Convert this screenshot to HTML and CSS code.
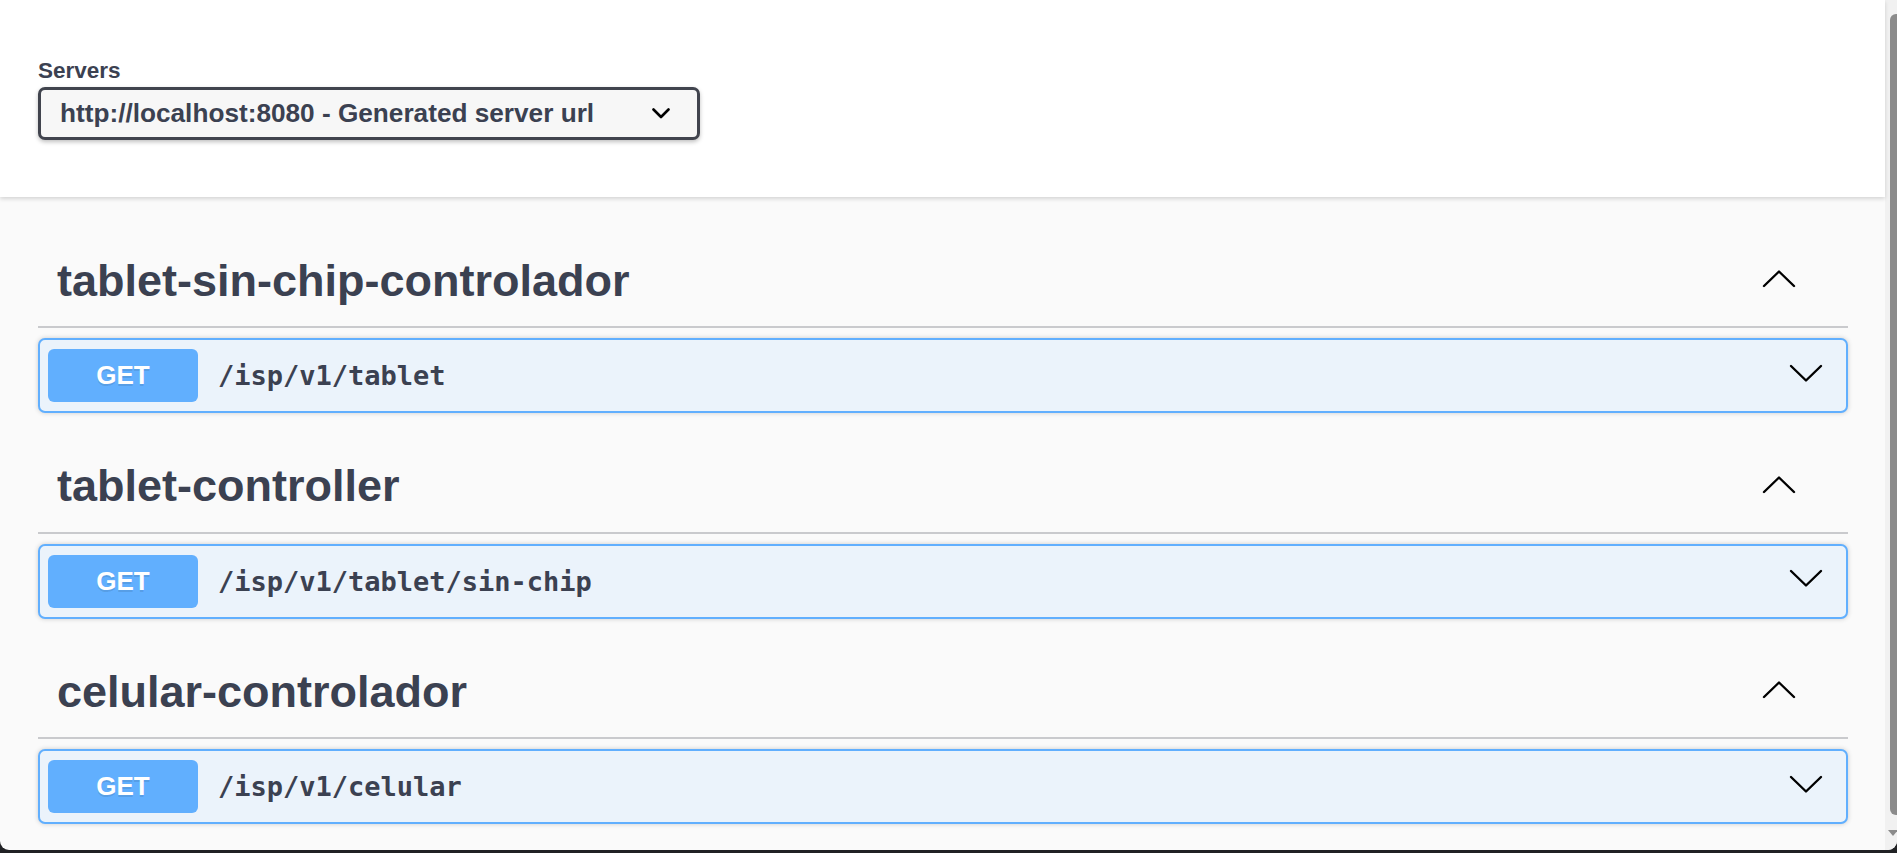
FILE: index.html
```html
<!DOCTYPE html>
<html lang="es">
<head>
<meta charset="utf-8">
<title>Swagger UI</title>
<link rel="stylesheet" href="styles.css">
</head>
<body>
<div class="window">
  <div class="page">
    <header class="scheme">
      <div class="servers">
        <span class="servers-title">Servers</span>
        <div class="select">
          <span class="select-text">http://localhost:8080 - Generated server url</span>
          <svg class="select-chev" width="18" height="11" viewBox="0 0 18 11"><polyline points="1.5,1.5 9,9 16.5,1.5" fill="none" stroke="#000" stroke-width="2.6" stroke-linecap="round" stroke-linejoin="round"/></svg>
        </div>
      </div>
    </header>
    <main class="wrapper">
      <section class="tag-section">
        <h3 class="tag"><span class="tag-name">tablet-sin-chip-controlador</span>
          <svg class="tag-chev" width="34" height="19" viewBox="0 0 34 19"><polyline points="2,17 17,2.5 32,17" fill="none" stroke="#000" stroke-width="2.4" stroke-linecap="round" stroke-linejoin="round"/></svg>
        </h3>
        <div class="opblock">
          <span class="method">GET</span>
          <span class="path">/isp/v1/tablet</span>
          <svg class="op-chev" width="34" height="19" viewBox="0 0 34 19"><polyline points="2,2 17,16.5 32,2" fill="none" stroke="#000" stroke-width="2.4" stroke-linecap="round" stroke-linejoin="round"/></svg>
        </div>
      </section>
      <section class="tag-section">
        <h3 class="tag"><span class="tag-name">tablet-controller</span>
          <svg class="tag-chev" width="34" height="19" viewBox="0 0 34 19"><polyline points="2,17 17,2.5 32,17" fill="none" stroke="#000" stroke-width="2.4" stroke-linecap="round" stroke-linejoin="round"/></svg>
        </h3>
        <div class="opblock">
          <span class="method">GET</span>
          <span class="path">/isp/v1/tablet/sin-chip</span>
          <svg class="op-chev" width="34" height="19" viewBox="0 0 34 19"><polyline points="2,2 17,16.5 32,2" fill="none" stroke="#000" stroke-width="2.4" stroke-linecap="round" stroke-linejoin="round"/></svg>
        </div>
      </section>
      <section class="tag-section">
        <h3 class="tag"><span class="tag-name">celular-controlador</span>
          <svg class="tag-chev" width="34" height="19" viewBox="0 0 34 19"><polyline points="2,17 17,2.5 32,17" fill="none" stroke="#000" stroke-width="2.4" stroke-linecap="round" stroke-linejoin="round"/></svg>
        </h3>
        <div class="opblock">
          <span class="method">GET</span>
          <span class="path">/isp/v1/celular</span>
          <svg class="op-chev" width="34" height="19" viewBox="0 0 34 19"><polyline points="2,2 17,16.5 32,2" fill="none" stroke="#000" stroke-width="2.4" stroke-linecap="round" stroke-linejoin="round"/></svg>
        </div>
      </section>
    </main>
  </div>
  <div class="scrollbar">
    <div class="thumb"></div>
    <div class="sb-arrow"></div>
  </div>
</div>
</body>
</html>
```

FILE: styles.css
```css
html, body {
  margin: 0;
  padding: 0;
  height: 100%;
  overflow: hidden;
}

body {
  background: #202124;
  font-family: "Liberation Sans", Arial, sans-serif;
  color: #3b4151;
}

.window {
  display: flex;
  height: 850px;
  background: #fafafa;
  border-radius: 0 0 9px 9px;
  overflow: hidden;
}

.page {
  flex: 1;
  min-width: 0;
  display: flex;
  flex-direction: column;
}

/* ---------- servers header ---------- */
.scheme {
  background: #fff;
  box-shadow: 0 2px 4px 0 rgba(0, 0, 0, 0.15);
  padding: 58px 38px 57px;
  position: relative;
  z-index: 1;
}

.servers {
  display: flex;
  flex-direction: column;
  align-items: flex-start;
}

.servers-title {
  font-size: 22.5px;
  font-weight: 700;
  line-height: 26px;
  color: #3b4151;
}

.select {
  margin-top: 3px;
  box-sizing: border-box;
  width: 662px;
  height: 53px;
  display: flex;
  align-items: center;
  padding-left: 19px;
  border: 3px solid #41444e;
  border-radius: 7px;
  background: #f7f7f7;
  box-shadow: 0 2px 4px 0 rgba(0, 0, 0, 0.25);
}

.select-text {
  font-size: 26.2px;
  font-weight: 700;
  color: #3b4151;
  white-space: nowrap;
}

.select-chev {
  margin-left: auto;
  margin-right: 27px;
}

/* ---------- operations ---------- */
.wrapper {
  padding: 38px 37px 0 38px;
}

.tag-section {
  margin-bottom: 27.6px;
}

.tag {
  margin: 0;
  box-sizing: border-box;
  height: 93px;
  display: flex;
  align-items: center;
  padding: 0 52px 0 19px;
  border-bottom: 2px solid #c9cacd;
  font-size: 45px;
  font-weight: 700;
  color: #3b4151;
}

.tag-name {
  white-space: nowrap;
}

.tag-chev {
  margin-left: auto;
  margin-bottom: 4px;
}

.opblock {
  margin-top: 10px;
  box-sizing: border-box;
  height: 75px;
  display: flex;
  align-items: center;
  padding: 0 23px 0 8px;
  border: 2px solid #61affe;
  border-radius: 7px;
  background: #ebf3fb;
  box-shadow: 0 0 5px rgba(0, 0, 0, 0.19);
}

.method {
  width: 150px;
  height: 53px;
  display: flex;
  align-items: center;
  justify-content: center;
  background: #61affe;
  border-radius: 6px;
  color: #fff;
  font-size: 26px;
  font-weight: 700;
  text-shadow: 0 2px 0 rgba(0, 0, 0, 0.1);
}

.path {
  margin-left: 20px;
  font-family: "DejaVu Sans Mono", "Liberation Mono", monospace;
  font-size: 27px;
  font-weight: 700;
  color: #3b4151;
  white-space: nowrap;
}

.op-chev {
  margin-left: auto;
  margin-bottom: 5px;
}

/* ---------- scrollbar ---------- */
.scrollbar {
  width: 12px;
  flex-shrink: 0;
  background: #f1f1f1;
  display: flex;
  flex-direction: column;
  padding-top: 14px;
  box-sizing: border-box;
}

.thumb {
  margin-left: 5px;
  width: 12px;
  height: 801px;
  background: #8b8b8b;
  border-radius: 6px 0 0 6px;
}

.sb-arrow {
  margin-top: 15px;
  margin-left: 3px;
  width: 0;
  height: 0;
  border-left: 5px solid transparent;
  border-right: 5px solid transparent;
  border-top: 6px solid #8b8b8b;
}
```
